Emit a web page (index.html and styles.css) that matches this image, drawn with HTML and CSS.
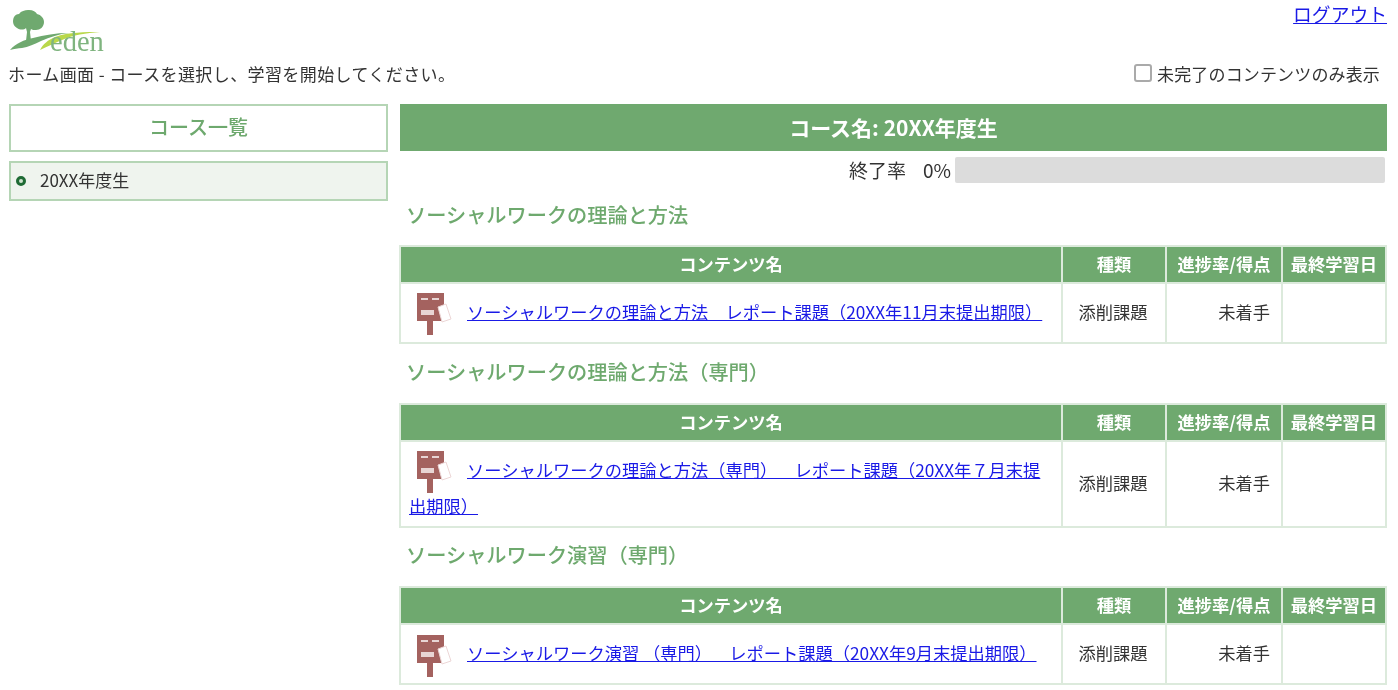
FILE: index.html
```html
<!DOCTYPE html>
<html lang="ja">
<head>
<meta charset="utf-8">
<title>eden</title>
<link rel="stylesheet" href="styles.css">
</head>
<body>
<div class="page">
  <header class="top">
    <svg class="logo" viewBox="0 0 96 46" width="96" height="46" aria-label="eden">
      <path fill="#6fa96f" d="M19 1c4 0 7 2 8 4 4 1 7 4 7 8 0 5-4 8-8 8-2 0-4 0-5-1l-1 3 1 9 2 2h-9l2-2 1-9-1-4c-2 2-6 2-9 0-4-2-5-7-3-11 1-2 3-3 5-3 2-3 6-4 9-4z"/>
      <path fill="#6fa96f" d="M0 41c6-7 14-10 23-12 11-3 23-5 36-5-10 1-19 4-28 8-6 3-13 6-19 7-4 0-8 1-12 2z"/>
      <path fill="#b9d84a" d="M30 41c3-6 8-10 15-13 14-5 30-5 45-5-14 1-27 3-38 8-7 3-14 6-22 10z"/>
      <text class="logo-text" x="40" y="42">eden</text>
    </svg>
    <a class="logout" href="#">ログアウト</a>
  </header>
  <div class="subbar">
    <span class="lead">ホーム画面 - コースを選択し、学習を開始してください。</span>
    <label class="filter"><span class="check"></span>未完了のコンテンツのみ表示</label>
  </div>
  <div class="layout">
    <aside class="side">
      <div class="side-title">コース一覧</div>
      <div class="side-item"><span class="dot"></span>20XX年度生</div>
    </aside>
    <main class="main">
      <div class="course">コース名: 20XX年度生</div>
      <div class="rate"><span>終了率&nbsp;&nbsp;&nbsp; 0%</span><span class="bar"></span></div>

      <h2 class="sec sec-first">ソーシャルワークの理論と方法</h2>
      <table class="tbl">
        <thead><tr><th>コンテンツ名</th><th>種類</th><th>進捗率/得点</th><th>最終学習日</th></tr></thead>
        <tbody><tr>
          <td class="name"><svg class="post" viewBox="0 0 36 44" width="36" height="44"><use href="#p"/></svg><a href="#">ソーシャルワークの理論と方法　レポート課題（20XX年11月末提出期限）</a></td>
          <td class="c">添削課題</td><td class="r">未着手</td><td></td>
        </tr></tbody>
      </table>

      <h2 class="sec">ソーシャルワークの理論と方法（専門）</h2>
      <table class="tbl">
        <thead><tr><th>コンテンツ名</th><th>種類</th><th>進捗率/得点</th><th>最終学習日</th></tr></thead>
        <tbody><tr>
          <td class="name"><svg class="post" viewBox="0 0 36 44" width="36" height="44"><use href="#p"/></svg><a href="#">ソーシャルワークの理論と方法（専門）　レポート課題（20XX年７月末提出期限）</a></td>
          <td class="c">添削課題</td><td class="r">未着手</td><td></td>
        </tr></tbody>
      </table>

      <h2 class="sec sec-last">ソーシャルワーク演習（専門）</h2>
      <table class="tbl">
        <thead><tr><th>コンテンツ名</th><th>種類</th><th>進捗率/得点</th><th>最終学習日</th></tr></thead>
        <tbody><tr>
          <td class="name"><svg class="post" viewBox="0 0 36 44" width="36" height="44"><use href="#p"/></svg><a href="#">ソーシャルワーク演習 （専門）　レポート課題（20XX年9月末提出期限）</a></td>
          <td class="c">添削課題</td><td class="r">未着手</td><td></td>
        </tr></tbody>
      </table>
    </main>
  </div>
</div>
<svg class="defs" width="0" height="0">
  <symbol id="p" viewBox="0 0 36 44">
    <rect x="1" y="1" width="27" height="28" fill="#a4625f"/>
    <rect x="5" y="6" width="7" height="2" fill="#e8d5d4"/>
    <rect x="16" y="6" width="7" height="2" fill="#e8d5d4"/>
    <rect x="5" y="18" width="13" height="5" fill="#e8d5d4"/>
    <rect x="11" y="29" width="6" height="14" fill="#a4625f"/>
    <path d="M22 15l8-3 5 15-9 3z" fill="#fff" stroke="#ecd6d6"/>
  </symbol>
</svg>
</body>
</html>
```
FILE: styles.css
```css
* { box-sizing: border-box; }
html, body { margin: 0; padding: 0; background: #fff; }
body {
  font-family: "Noto Sans CJK JP", "Liberation Sans", sans-serif;
  font-size: 17px;
  color: #333;
  overflow: hidden;
}
.page {
  width: 1398px;
  height: 690px;
  padding: 0 11px 0 9px;
  filter: blur(0.7px);
}
.defs { position: absolute; }
.top {
  display: flex;
  justify-content: space-between;
  height: 61px;
  padding-top: 9px;
}
.logo { display: block; margin-left: 1px; overflow: visible; }
.logo-text { font-family: "Liberation Serif", serif; font-size: 28.5px; fill: #7fb47f; }
.logout { font-size: 18.8px; line-height: 1; margin-top: -4px; color: #1a1ae6; }
.subbar {
  display: flex;
  justify-content: space-between;
  align-items: center;
  height: 24px;
  margin-bottom: 19px;
  padding-right: 7px;
}
.lead { margin-left: -1px; letter-spacing: 0.4px; }
.filter { display: flex; align-items: center; letter-spacing: 0.15px; }
.check {
  width: 18px;
  height: 18px;
  margin-right: 5px;
  border: 2px solid #aaa;
  border-radius: 3px;
  background: #fff;
}
.layout { display: flex; gap: 12px; align-items: flex-start; }
.side { width: 379px; flex: none; }
.side-title {
  height: 48px;
  border: 2px solid #b5d5b5;
  color: #6ea96e;
  font-size: 20px;
  font-weight: 500;
  display: flex;
  align-items: center;
  justify-content: center;
  padding-bottom: 4px;
}
.side-item {
  height: 40px;
  margin-top: 9px;
  background: #eff4ee;
  border: 2px solid #b5d5b5;
  display: flex;
  align-items: center;
  font-size: 17px;
  padding: 0 0 3px 5px;
}
.dot {
  width: 10px;
  height: 10px;
  margin: 3px 14px 0 0;
  border-radius: 50%;
  border: 3px solid #1f6b35;
  background: #cfe3cf;
}
.main { width: 987px; flex: none; }
.course {
  height: 47px;
  background: #6fa96f;
  color: #fff;
  font-size: 21px;
  font-weight: 700;
  display: flex;
  align-items: center;
  justify-content: center;
  padding-bottom: 2px;
}
.rate {
  display: flex;
  justify-content: flex-end;
  align-items: center;
  gap: 4px;
  height: 26px;
  margin-top: 6px;
  font-size: 19px;
  line-height: 26px;
  padding-right: 2px;
}
.rate span:first-child { margin-top: -1px; }
.bar { width: 430px; height: 26px; background: #dcdcdc; border-radius: 2px; }
.sec {
  height: 34px;
  padding: 0 0 0 6px;
  display: flex;
  align-items: center;
  color: #6ea96e;
  font-size: 20.2px;
  font-weight: 500;
  margin: 10px 0 15px;
}
.sec-first { margin: 14px 0 14px; }
.sec-last { margin: 9px 0 15px; }
.tbl {
  width: 986px;
  margin-left: -1px;
  border-collapse: collapse;
  table-layout: fixed;
  font-size: 17.25px;
}
.tbl th {
  height: 37px;
  padding: 0 0 2px;
  background: #6fa96f;
  color: #fff;
  font-weight: 700;
  font-size: 17.25px;
  border: 2px solid #dceadc;
  white-space: nowrap;
}
.tbl th:nth-child(1) { width: 662px; }
.tbl th:nth-child(2) { width: 104px; }
.tbl th:nth-child(3) { width: 116px; }
.tbl th:nth-child(4) { width: 104px; }
.tbl td { border: 2px solid #dceadc; padding: 0 11px 3px 9px; height: 60px; }
.tbl td.name {
  padding: 10px 12px 2px 8px;
  line-height: 36px;
  vertical-align: top;
  text-spacing-trim: space-all;
}
.post { vertical-align: middle; margin: -6px 15px -6px 7px; }
.name a { color: #1a1ae6; }
.c { text-align: center; }
.r { text-align: right; }
```
